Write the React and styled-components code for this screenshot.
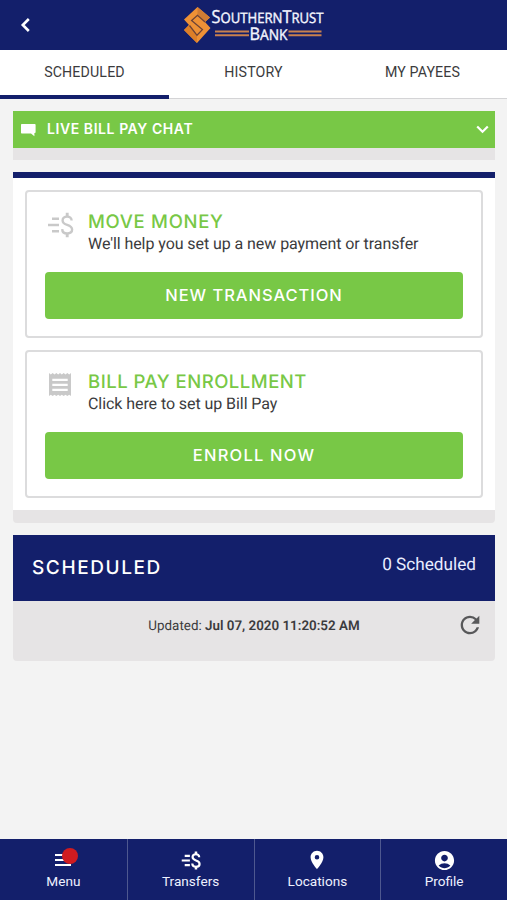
import React from 'react'
import styled, { createGlobalStyle } from 'styled-components'
import {
  MdAccountCircle,
  MdPlace,
  MdRefresh,
} from 'react-icons/md'

const navy = '#131f6b'
const green = '#78c846'
const lightGrey = '#e6e4e5'
const iconGrey = '#c9c9c9'
const darkText = '#3b3b3d'

const GlobalStyle = createGlobalStyle`
  * {
    box-sizing: border-box;
  }

  body {
    margin: 0;
    background: #f3f3f3;
    color: ${darkText};
    font-family: Roboto, 'Liberation Sans', sans-serif;
    text-rendering: geometricPrecision;
  }

  button {
    border: none;
    padding: 0;
    background: none;
    color: inherit;
    font: inherit;
  }

  svg {
    display: block;
  }
`

const Screen = styled.div`
  display: flex;
  flex-direction: column;
  height: 900px;
  overflow: hidden;
`

const TopBar = styled.header`
  display: grid;
  grid-template-columns: 1fr auto 1fr;
  align-items: center;
  flex: none;
  height: 50px;
  padding: 0 20px;
  background: ${navy};
  color: #fff;
`

const BackButton = styled.button`
  justify-self: start;
`

const Tabs = styled.nav`
  display: grid;
  grid-template-columns: repeat(3, 1fr);
  flex: none;
  height: 49px;
  background: #fff;
`

const Tab = styled.button`
  height: 49px;
  border-bottom: ${({ $active }) => ($active ? `4px solid ${navy}` : '1px solid #d4d4d6')};
  padding-bottom: ${({ $active }) => ($active ? '1px' : '4px')};
  font-size: 14.2px;
  letter-spacing: 0.14px;
`

const Content = styled.main`
  display: flex;
  flex-direction: column;
  flex: 1;
  gap: 12px;
  padding: 12px 12px 0 13px;
`

const ChatPanel = styled.section`
  border-bottom: 12px solid ${lightGrey};
`

const ChatBar = styled.button`
  display: flex;
  align-items: center;
  width: 100%;
  height: 37px;
  padding: 0 6px 0 8px;
  background: ${green};
  color: #fff;
`

const ChatLabel = styled.span`
  flex: 1;
  padding-bottom: 2px;
  margin-left: 11px;
  text-align: left;
  font-family: Inter, sans-serif;
  font-size: 14px;
  font-weight: 600;
  letter-spacing: 0.57px;
`

const ActionsPanel = styled.section`
  display: flex;
  flex-direction: column;
  gap: 12px;
  height: 351px;
  padding: 12px;
  border-top: 6px solid ${navy};
  border-bottom: 13px solid ${lightGrey};
  border-radius: 0 0 4px 4px;
  background: #fff;
`

const Card = styled.article`
  height: 148px;
  padding: 19px 18px;
  border: 2px solid #dcdcdd;
  border-radius: 4px;
`

const CardTop = styled.div`
  display: flex;
  height: 61px;
`

const CardIcon = styled.div`
  display: flex;
  justify-content: center;
  align-items: flex-start;
  width: 30px;
  padding-top: 1px;
  margin-right: 13px;
  color: ${iconGrey};
`

const CardTitle = styled.h2`
  margin: 0;
  color: ${green};
  font-family: Inter, sans-serif;
  font-size: 18.5px;
  font-weight: 500;
  line-height: 22px;
  letter-spacing: ${({ $spacing }) => $spacing};
`

const CardText = styled.p`
  margin: 0;
  font-size: 16px;
  line-height: 21px;
  letter-spacing: -0.07px;
`

const CardButton = styled.button`
  width: 100%;
  height: 47px;
  padding-bottom: 1px;
  border-radius: 4px;
  background: ${green};
  color: #fff;
  font-family: Inter, sans-serif;
  font-size: 16.5px;
  font-weight: 500;
  letter-spacing: ${({ $spacing }) => $spacing};
`

const ScheduledPanel = styled.section`
  border-radius: 0 0 4px 4px;
  background: ${lightGrey};
`

const ScheduledHeader = styled.div`
  display: flex;
  align-items: center;
  justify-content: space-between;
  height: 66px;
  padding: 0 19px;
  background: ${navy};
  color: #fff;
`

const ScheduledTitle = styled.h2`
  margin: 0;
  padding-bottom: 2px;
  font-family: Inter, sans-serif;
  font-size: 19px;
  font-weight: 500;
  letter-spacing: 1.6px;
`

const ScheduledCount = styled.span`
  padding-bottom: 6px;
  color: #e9edff;
  font-size: 17.2px;
`

const UpdatedRow = styled.div`
  display: grid;
  grid-template-columns: 1fr auto 1fr;
  height: 60px;
  padding: 10px 11px;
  font-size: 13.4px;
  line-height: 32px;
`

const UpdatedText = styled.span`
  grid-column: 2;

  b {
    font-weight: 600;
  }
`

const RefreshButton = styled.button`
  justify-self: end;
  height: 28px;
  color: #58585a;
  stroke: #58585a;
  stroke-width: 0.4px;
`

const BottomNav = styled.nav`
  display: grid;
  grid-template-columns: repeat(4, 1fr);
  flex: none;
  height: 61px;
  background: ${navy};
`

const NavItem = styled.button`
  display: flex;
  flex-direction: column;
  align-items: center;
  padding-top: 9px;
  color: #eef1ff;
  font-size: 13.6px;
  line-height: 18px;

  & + & {
    border-left: 1px solid #4e588f;
  }
`

const NavIcon = styled.div`
  position: relative;
  display: flex;
  align-items: center;
  justify-content: center;
  width: 24px;
  height: 24px;
  color: #fff;
`

const Badge = styled.span`
  position: absolute;
  top: 0;
  right: -3px;
  width: 16px;
  height: 16px;
  border-radius: 50%;
  background: #cf1b20;
`

const BackIcon = () => (
  <svg width="11" height="16" viewBox="0 0 11 16" fill="none">
    <path d="M8.8 2 L2.8 8 L8.8 14" stroke="#fff" strokeWidth="2.6" />
  </svg>
)

const ChatIcon = () => (
  <svg width="15" height="14" viewBox="0 0 15 14">
    <path d="M1 1h12.6c.6 0 1 .4 1 1v7c0 .6-.4 1-1 1h-.2v3.2L10 10.4H1c-.6 0-1-.4-1-1V2c0-.6.4-1 1-1z" fill="#fff" />
  </svg>
)

const ChevronIcon = () => (
  <svg width="13" height="9" viewBox="0 0 13 9" fill="none">
    <path d="M1.2 1.5 L6.5 6.8 L11.8 1.5" stroke="#fff" strokeWidth="2.2" />
  </svg>
)

const MoneyIcon = ({ width, height, stroke = 2.4 }) => (
  <svg width={width} height={height} viewBox="0 0 27 25" fill="none" stroke="currentColor" strokeWidth={stroke}>
    <path d="M5 6.2h7 M1 12.5h11 M5 18.8h7" />
    <path d="M24.6 8.1 C24.6 5.5 22.8 4.1 20.1 4.1 C17.3 4.1 15.6 5.7 15.6 7.9 C15.6 10.6 17.5 11.5 20.2 12.4 C23.2 13.4 25.1 14.4 25.1 17.1 C25.1 19.6 23.1 21 20.2 21 C17.2 21 15.3 19.3 15.2 16.6" />
    <path d="M20.2 0.3v4 M20.2 20.7v4" strokeWidth={stroke + 0.5} />
  </svg>
)

const ReceiptIcon = () => (
  <svg width="24" height="26" viewBox="0 0 24 26">
    <path
      d="M1 1l1.8 1.5L4.7 1l1.8 1.5L8.3 1l1.9 1.5L12 1l1.8 1.5L15.7 1l1.8 1.5L19.3 1l1.9 1.5L23 1v23l-1.8-1.2-1.9 1.2-1.8-1.2-1.8 1.2-1.9-1.2L12 24l-1.8-1.2L8.3 24l-1.8-1.2L4.7 24l-1.9-1.2L1 24z"
      fill="currentColor"
    />
    <path d="M4.3 7.8h15.4 M4.3 12.8h15.4 M4.3 17.8h15.4" stroke="#fff" strokeWidth="2.2" />
  </svg>
)

const MenuIcon = () => (
  <svg width="18" height="14" viewBox="0 0 18 14" fill="none" stroke="currentColor" strokeWidth="2.2">
    <path d="M1 2h16 M1 7h16 M1 12h16" />
  </svg>
)

const Logo = () => (
  <svg width="150" height="50" viewBox="-4 -6 150 50" role="img">
    <path d="M14.5 1 L27 11.5 L22 16 L27.5 22 L14 37 L1 24 L6 19 L1 13.5 Z" fill="#ee9136" />
    <path d="M14.5 1 L27 11.5 L22 16 L14.5 8.5 Z" fill="#d07c34" />
    <path d="M6 19 L1 24 L14 37 L14 30 Z" fill="#dd7f28" />
    <path d="M22 16 L14.5 9.3 L8.6 14.6 L19.4 23.6 L14 29.3 L6.5 19.5" fill="none" stroke="#6b4238" strokeWidth="1.3" />
    <g fill="#f4f6ff" fontFamily="'Open Sans', sans-serif" stroke="#f4f6ff" strokeWidth="0.4">
      <text x="28.5" y="17" fontSize="14.5" textLength="112" lengthAdjust="spacingAndGlyphs">
        <tspan fontSize="18">S</tspan>OUTHERN<tspan fontSize="18">T</tspan>RUST
      </text>
      <text x="66.5" y="33.5" fontSize="14.8" textLength="38" lengthAdjust="spacingAndGlyphs">
        <tspan fontSize="17.5">B</tspan>ANK
      </text>
    </g>
    <path d="M32 25.5h34 M32 29.3h34 M105.5 25.5h33 M105.5 29.3h33" stroke="#c9814f" strokeWidth="2" />
  </svg>
)

const tabs = ['SCHEDULED', 'HISTORY', 'MY PAYEES']

const actions = [
  {
    title: 'MOVE MONEY',
    titleSpacing: '0.7px',
    text: "We'll help you set up a new payment or transfer",
    button: 'NEW TRANSACTION',
    buttonSpacing: '0.95px',
    icon: <MoneyIcon width={27} height={26} />,
  },
  {
    title: 'BILL PAY ENROLLMENT',
    titleSpacing: '0.5px',
    text: 'Click here to set up Bill Pay',
    button: 'ENROLL NOW',
    buttonSpacing: '1.2px',
    icon: <ReceiptIcon />,
  },
]

const navItems = [
  { label: 'Menu', icon: <MenuIcon />, badge: true },
  { label: 'Transfers', icon: <MoneyIcon width={20} height={19} stroke={2.9} /> },
  { label: 'Locations', icon: <MdPlace size={22} /> },
  { label: 'Profile', icon: <MdAccountCircle size={23} /> },
]

const App = () => (
  <Screen>
    <GlobalStyle />
    <TopBar>
      <BackButton aria-label="Back"><BackIcon /></BackButton>
      <Logo />
    </TopBar>
    <Tabs>
      {tabs.map((tab, i) => (
        <Tab key={tab} $active={i === 0}>{tab}</Tab>
      ))}
    </Tabs>
    <Content>
      <ChatPanel>
        <ChatBar>
          <ChatIcon />
          <ChatLabel>LIVE BILL PAY CHAT</ChatLabel>
          <ChevronIcon />
        </ChatBar>
      </ChatPanel>
      <ActionsPanel>
        {actions.map(action => (
          <Card key={action.title}>
            <CardTop>
              <CardIcon>{action.icon}</CardIcon>
              <div>
                <CardTitle $spacing={action.titleSpacing}>{action.title}</CardTitle>
                <CardText>{action.text}</CardText>
              </div>
            </CardTop>
            <CardButton $spacing={action.buttonSpacing}>{action.button}</CardButton>
          </Card>
        ))}
      </ActionsPanel>
      <ScheduledPanel>
        <ScheduledHeader>
          <ScheduledTitle>SCHEDULED</ScheduledTitle>
          <ScheduledCount>0 Scheduled</ScheduledCount>
        </ScheduledHeader>
        <UpdatedRow>
          <UpdatedText>Updated: <b>Jul 07, 2020 11:20:52 AM</b></UpdatedText>
          <RefreshButton aria-label="Refresh"><MdRefresh size={28} /></RefreshButton>
        </UpdatedRow>
      </ScheduledPanel>
    </Content>
    <BottomNav>
      {navItems.map(({ label, icon, badge }) => (
        <NavItem key={label}>
          <NavIcon>
            {icon}
            {badge && <Badge />}
          </NavIcon>
          {label}
        </NavItem>
      ))}
    </BottomNav>
  </Screen>
)

export default App
